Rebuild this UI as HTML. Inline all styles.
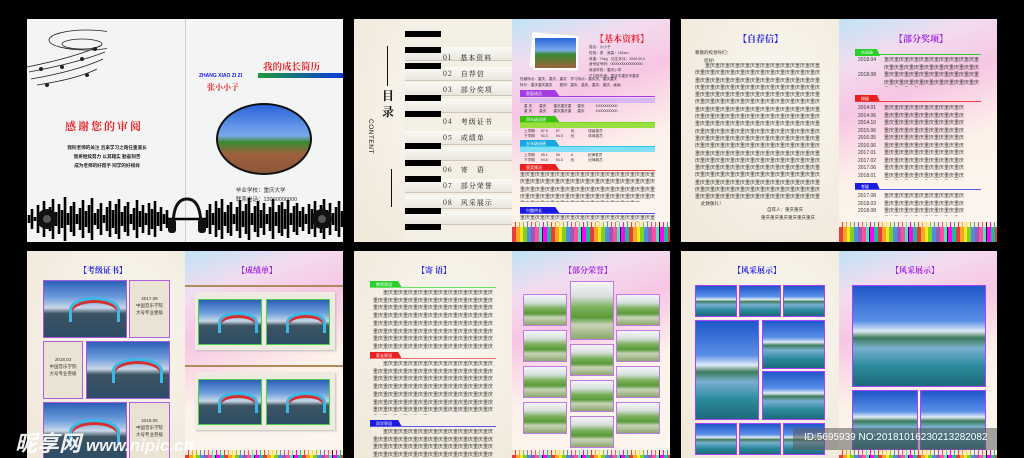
<!DOCTYPE html>
<html><head><meta charset="utf-8">
<style>
*{margin:0;padding:0;box-sizing:border-box}
body{width:1024px;height:458px;background:#000;position:relative;overflow:hidden;font-family:"Liberation Sans","Noto Sans CJK SC",sans-serif}
.a{position:absolute}
.pg{position:absolute;overflow:hidden}
.beige{background:radial-gradient(ellipse at 60% 40%,#fbf8f1 0%,#efe7d8 100%)}
.pastel{background:linear-gradient(160deg,#bfe3f5 0%,#f3dcef 18%,#f7c6e4 35%,#fdf2ea 60%,#fbf6ee 100%)}
.t{position:absolute;font-size:5px;line-height:7.3px;color:#333;overflow:hidden;word-break:break-all}
.ti{position:absolute;font-family:"Noto Serif CJK SC","Noto Sans CJK SC",serif;font-weight:bold;font-size:10px;white-space:nowrap}
.hd{position:absolute;height:7px;font-size:4px;color:#fff;line-height:7px;padding-left:6px;clip-path:polygon(0 0,88% 0,100% 100%,0 100%)}
.ln{position:absolute;height:1px}
.pencil{position:absolute;background:repeating-linear-gradient(90deg,#e83c3c 0 4px,#f5a623 4px 8px,#f8e71c 8px 11px,#7ed321 11px 15px,#4a90e2 15px 19px,#9b59b6 19px 23px,#ff4fa0 23px 27px,#50e3c2 27px 30px,#222 30px 31px,#f0f 31px 35px,#1abc9c 35px 39px)}
.pencil:before{content:"";position:absolute;left:0;right:0;top:0;height:5px;background:repeating-linear-gradient(90deg,#fde9d0 0 3px,transparent 3px 4px)}
.br{background:linear-gradient(#2c5fb8 0%,#6f9fdc 30%,#c9d6e6 48%,#3d5462 58%,#2d4c66 100%);border:1.5px solid #a45ad8}
.br:after{content:"";position:absolute;left:30%;top:28%;width:55%;height:40%;border:3px solid #3cb8e6;border-bottom:none;border-radius:50% 50% 0 0;box-shadow:inset 0 3px 0 #d43030}
.lk{background:linear-gradient(#1f57c9 0%,#5a8fe6 35%,#e0ecf6 45%,#3c7a5a 52%,#7ab0d0 62%,#2a8a9c 80%,#1d6a7a 100%);border:1.5px solid #a840ff}
.ks{background:linear-gradient(#f4f6f8 0%,#d8e0dc 25%,#7ab05a 45%,#5a9a3a 62%,#c8d4b8 75%,#8aa86a 100%);border:1.5px solid #c07ae8}
.box{background:#eae3d3;border:1.5px solid #b05ee0;font-size:4.5px;color:#333;text-align:center;line-height:7px;padding-top:14px}
.key{position:absolute;left:0;width:36px;height:6px;background:#000}
.row{position:absolute;left:0;width:107px;height:14px;border-bottom:1px solid #cfc8ba;background:linear-gradient(#fafaf6,#eae6dd)}
.it{position:absolute;left:38px;font-size:7px;color:#111;font-family:"Noto Serif CJK SC",serif;letter-spacing:1px}
.yr{position:absolute;font-size:5px;color:#333;line-height:7.5px}
</style></head><body>

<!-- ===== Spread 1 cover ===== -->
<div class="pg" style="left:27px;top:19px;width:316px;height:223px;background:#f3f5f5">
 <div class="a" style="left:158px;top:0;width:1px;height:223px;background:#ccc"></div>
 <svg class="a" style="left:0;top:8px" width="80" height="75"><g fill="none" stroke="#222" stroke-width=".8"><ellipse cx="60" cy="13" rx="38" ry="10"/><ellipse cx="55" cy="17" rx="20" ry="5"/><path d="M0 40 Q50 30 75 18 M2 45 Q50 36 78 25 M4 52 Q50 44 76 32 M10 58 Q50 52 70 42"/></g><g fill="#222"><circle cx="14" cy="42" r="2"/><circle cx="35" cy="40" r="2"/><circle cx="55" cy="32" r="2"/><circle cx="68" cy="22" r="2"/><circle cx="20" cy="58" r="2"/><circle cx="60" cy="48" r="2"/></g></svg>
 <div class="ti" style="left:38px;top:99px;color:#e8232a;font-size:11px;letter-spacing:2px">感谢您的审阅</div>
 <div class="a" style="left:20px;top:124px;width:120px;text-align:center;font-size:4.6px;line-height:9px;color:#222;font-weight:bold">我衔老师的关注 且来学习之路任重道长<br>我将继续努力 以其踏实 勤奋刻苦<br>成为老师的好帮手 同学的好榜样</div>
 <div class="ti" style="left:236px;top:40px;color:#e8232a;font-size:9.5px">我的成长简历</div>
 <div class="a" style="left:172px;top:54px;font-size:5px;color:#1a1ae0;font-weight:bold;white-space:nowrap">ZHANG XIAO ZI ZI</div>
 <div class="a" style="left:231px;top:54px;width:85px;height:5px;background:linear-gradient(90deg,#1a9a3a,#0a3ae0)"></div>
 <div class="ti" style="left:180px;top:63px;color:#e8232a;font-size:8px">张小小子</div>
 <div class="a" style="left:189px;top:84px;width:96px;height:72px;border-radius:50%;border:2px solid #111;background:linear-gradient(#2a64d8 0%,#7aa8ee 45%,#3a8a30 55%,#a0603e 72%,#8a5838 100%)"></div>
 <div class="a" style="left:209px;top:168px;font-size:5.5px;color:#333;line-height:9px">毕业学校：重庆大学<br>联系电话：13000000000</div>
 <svg class="a" style="left:0;top:176px" width="316" height="47"><g stroke="#000" stroke-width="2.6"><path d="M2 20V28M5 14V34M8 22V26M11 10V38M14 18V30M17 6V42M20 19V29M23 12V36M26 4V44M29 17V31M32 9V39M35 15V33M38 2V46M41 18V30M44 11V37M47 7V41M50 19V29M53 13V35M56 5V43M59 16V32M62 10V38M65 3V45M68 18V30M71 14V34M74 8V40M77 20V28M80 12V36M83 6V42M86 15V33M89 9V39M92 4V44M95 17V31M98 11V37M101 7V41M104 19V29M107 13V35M110 5V43M113 16V32M116 10V38M119 18V30M122 8V40M125 14V34M128 6V42M131 17V31M134 12V36M137 19V29M140 15V33M180 15V33M183 9V39M186 18V30M189 6V42M192 13V35M195 4V44M198 17V31M201 10V38M204 7V41M207 19V29M210 12V36M213 5V43M216 16V32M219 9V39M222 3V45M225 18V30M228 11V37M231 6V42M234 15V33M237 8V40M240 19V29M243 12V36M246 4V44M249 17V31M252 10V38M255 7V41M258 14V34M261 5V43M264 18V30M267 11V37M270 8V40M273 16V32M276 12V36M279 19V29M282 9V39M285 14V34M288 6V42M291 17V31M294 10V38M297 4V44M300 15V33M303 8V40M306 18V30M309 12V36M312 6V42M315 16V32"/><path d="M140 24H180"/></g><circle cx="20" cy="24" r="10" fill="#111"/><circle cx="20" cy="24" r="4" fill="#555"/><circle cx="295" cy="24" r="10" fill="#111"/><circle cx="295" cy="24" r="4" fill="#555"/><path d="M146 32 Q146 4 160 4 Q174 4 174 32" fill="none" stroke="#111" stroke-width="3"/><rect x="141" y="24" width="8" height="14" rx="3" fill="#111"/><rect x="171" y="24" width="8" height="14" rx="3" fill="#111"/></svg>
</div>

<!-- ===== Spread 2 left: contents ===== -->
<div class="pg beige" style="left:354px;top:19px;width:158px;height:223px">
 <div class="a" style="left:51px;top:0;width:107px;height:223px;background:#f4efe4"></div>
 <div class="a" style="left:33px;top:27px;width:1px;height:40px;background:#111"></div>
 <div class="ti" style="left:28px;top:69px;font-size:12px;line-height:16px;width:14px;color:#111">目<br>录</div>
 <div class="a" style="left:20px;top:100px;font-size:6.5px;color:#111;transform:rotate(90deg);transform-origin:left top;white-space:nowrap;letter-spacing:.5px">CONTENT</div>
 <div class="a" style="left:37px;top:150px;width:1px;height:38px;background:#111"></div>
 <div class="a" style="left:51px;top:0;width:107px;height:223px">
  <div class="row" style="top:28px"></div><div class="row" style="top:48px"></div><div class="row" style="top:63px"></div><div class="row" style="top:80px"></div><div class="row" style="top:112px"></div><div class="row" style="top:128px"></div><div class="row" style="top:160px"></div><div class="row" style="top:176px"></div><div class="row" style="top:192px"></div>
  <div class="key" style="top:12px"></div><div class="key" style="top:28px"></div><div class="key" style="top:44px"></div><div class="key" style="top:76px"></div><div class="key" style="top:92px"></div><div class="key" style="top:124px"></div><div class="key" style="top:141px"></div><div class="key" style="top:157px"></div><div class="key" style="top:189px"></div><div class="key" style="top:205px"></div>
  <div class="it" style="top:34px">01　基本资料</div>
  <div class="it" style="top:50px">02　自荐信</div>
  <div class="it" style="top:66px">03　部分奖项</div>
  <div class="it" style="top:98px">04　考级证书</div>
  <div class="it" style="top:114px">05　成绩单</div>
  <div class="it" style="top:146px">06　寄　语</div>
  <div class="it" style="top:162px">07　部分荣誉</div>
  <div class="it" style="top:179px">08　风采展示</div>
 </div>
</div>

<!-- ===== Spread 2 right: basic info ===== -->
<div class="pg pastel" style="left:512px;top:19px;width:158px;height:223px">
 <div class="a" style="left:19px;top:15px;width:46px;height:35px;background:#fff;transform:rotate(5deg)"></div>
 <div class="a" style="left:21px;top:17px;width:45px;height:34px;background:#fff;padding:2px"><div style="width:100%;height:100%;background:linear-gradient(#2a64d8,#7aa8ee 40%,#3a8a30 55%,#a0603e)"></div></div>
 <div class="ti" style="left:83px;top:13px;color:#e8232a;font-size:9px">【基本资料】</div>
 <div class="a" style="left:77px;top:26px;font-size:3.6px;line-height:5.8px;color:#333">姓名：小小子<br>性别：男　身高：160cm<br>体重：70kg　出生年月：2000.00.0<br>身份证号码：0000000000000000<br>就读学校：重庆小学<br>户口所在地：重庆市重庆市重庆</div>
 <div class="a" style="left:8px;top:58px;font-size:3.6px;line-height:5.8px;color:#333">性格特点：重庆、重庆、重庆　学习特点：重庆庆、重庆重庆<br>特长：重庆重庆重庆　　爱好：重庆、重庆、重庆、重庆、画画</div>
 <div class="hd" style="left:8px;top:71px;width:40px;background:#a53be0">家庭成员</div><div class="ln" style="left:8px;top:77px;width:135px;background:#a53be0"></div>
 <div class="a" style="left:8px;top:79px;width:135px;height:5px;background:#d8b8f0"></div>
 <div class="a" style="left:12px;top:85px;font-size:3.6px;line-height:5px;color:#333;white-space:pre">重 庆       重庆       重庆重庆重      重庆           10000000000
重 庆       重庆       重庆重庆重      重庆           10000000000</div>
 <div class="hd" style="left:8px;top:97px;width:40px;background:#38c010">四年级成绩</div><div class="ln" style="left:8px;top:103px;width:135px;background:#7cd61c"></div>
 <div class="a" style="left:8px;top:104px;width:135px;height:5px;background:#98e040"></div>
 <div class="a" style="left:12px;top:110px;font-size:3.6px;line-height:5px;color:#333;white-space:pre">上学期      97.9        97           优              班级委员
下学期      93.3        94.5        优              体育委员</div>
 <div class="hd" style="left:8px;top:121px;width:40px;background:#1aa8e0">五年级成绩</div><div class="ln" style="left:8px;top:127px;width:135px;background:#30c8f0"></div>
 <div class="a" style="left:8px;top:128px;width:135px;height:5px;background:#80e0f8"></div>
 <div class="a" style="left:12px;top:134px;font-size:3.6px;line-height:5px;color:#333;white-space:pre">上学期      95.1        98           A               纪律委员
下学期      94.6        94.5        优              纪律委员</div>
 <div class="hd" style="left:8px;top:145px;width:40px;background:#e82020">获奖情况</div><div class="ln" style="left:8px;top:151px;width:135px;background:#e84040"></div>
 <div class="t" style="left:8px;top:153px;width:135px;height:30px">重庆重庆重庆重庆重庆重庆重庆重庆重庆重庆重庆重庆重庆重庆重庆重庆重庆重庆重庆重庆重庆重庆重庆重庆重庆重庆重庆重庆重庆重庆重庆重庆重庆重庆重庆重庆重庆重庆重庆重庆重庆重庆重庆重庆重庆重庆重庆重庆重庆重庆重庆重庆重庆重庆重庆重庆重庆重庆重庆重庆重庆重庆重庆重庆重庆重庆</div>
 <div class="hd" style="left:8px;top:188px;width:40px;background:#1a1ae0">兴趣特长</div><div class="ln" style="left:8px;top:194px;width:135px;background:#4a4af0"></div>
 <div class="t" style="left:8px;top:196px;width:135px;height:14px">重庆重庆重庆重庆重庆重庆重庆重庆重庆重庆重庆重庆重庆重庆重庆重庆重庆重庆重庆重庆重庆重庆重庆重庆重庆重庆重庆</div>
 <div class="pencil" style="left:0;top:203px;width:158px;height:20px"></div>
</div>

<!-- ===== Spread 3 left: letter ===== -->
<div class="pg beige" style="left:681px;top:19px;width:158px;height:223px">
 <div class="ti" style="left:57px;top:13px;color:#1a1ae0;font-size:9px">【自荐信】</div>
 <div class="a" style="left:14px;top:30px;font-size:4.5px;line-height:8px;color:#333">尊敬的校领导们：<br>　　您好!</div>
 <div class="t" style="left:14px;top:44px;width:128px;height:138px;text-indent:10px">重庆重庆重庆重庆重庆重庆重庆重庆重庆重庆重庆重庆重庆重庆重庆重庆重庆重庆重庆重庆重庆重庆重庆重庆重庆重庆重庆重庆重庆重庆重庆重庆重庆重庆重庆重庆重庆重庆重庆重庆重庆重庆重庆重庆重庆重庆重庆重庆重庆重庆重庆重庆重庆重庆重庆重庆重庆重庆重庆重庆重庆重庆重庆重庆重庆重庆重庆重庆重庆重庆重庆重庆重庆重庆重庆重庆重庆重庆重庆重庆重庆重庆重庆重庆重庆重庆重庆重庆重庆重庆重庆重庆重庆重庆重庆重庆重庆重庆重庆重庆重庆重庆重庆重庆重庆重庆重庆重庆重庆重庆重庆重庆重庆重庆重庆重庆重庆重庆重庆重庆重庆重庆重庆重庆重庆重庆重庆重庆重庆重庆重庆重庆重庆重庆重庆重庆重庆重庆重庆重庆重庆重庆重庆重庆重庆重庆重庆重庆重庆重庆重庆重庆重庆重庆重庆重庆重庆重庆重庆重庆重庆重庆重庆重庆重庆重庆重庆重庆重庆重庆重庆重庆重庆重庆重庆重庆重庆重庆重庆重庆重庆重庆重庆重庆重庆重庆重庆重庆重庆重庆重庆重庆重庆重庆重庆重庆重庆重庆重庆重庆重庆重庆重庆重庆重庆重庆重庆重庆重庆重庆重庆重庆重庆重庆重庆重庆重庆重庆重庆重庆重庆重庆重庆重庆重庆重庆重庆重庆重庆重庆重庆重庆重庆重庆重庆重庆重庆重庆重庆重庆重庆重庆重庆重庆重庆重庆重庆重庆重庆重庆重庆重庆重庆重庆重庆重庆重庆重庆重庆重庆重庆重庆重庆重庆重庆重庆重庆重庆重庆重庆重庆重庆重庆重庆重庆重庆重庆重庆重庆重庆重庆重庆重庆重庆重庆重庆重庆重庆重庆重庆重庆重庆重庆重庆重庆重庆重庆重庆重庆重庆重庆重庆重庆重庆重庆重庆重庆重庆重庆重庆重庆重庆重庆重庆重庆重庆重庆重庆重庆重庆重庆重庆重庆重庆重庆重庆重庆重庆重庆重庆重庆重庆重庆重庆重庆重庆重庆重庆重庆重庆重庆重庆重庆重庆重庆重庆重庆重庆重庆重庆重庆重庆重庆重庆重庆</div>
 <div class="a" style="left:20px;top:182px;font-size:4.5px;color:#333">此致敬礼！</div>
 <div class="a" style="left:86px;top:187px;font-size:4.5px;line-height:8px;color:#333">自荐人：重庆重庆<br><span style="margin-left:-6px">重庆重庆重庆重庆重庆重庆</span></div>
</div>

<!-- ===== Spread 3 right: awards ===== -->
<div class="pg pastel" style="left:839px;top:19px;width:158px;height:223px">
 <div class="ti" style="left:55px;top:13px;color:#9b1ae0;font-size:9px">【部分奖项】</div>
 <div class="hd" style="left:16px;top:30px;width:25px;background:#2ad02a">市县级</div><div class="ln" style="left:16px;top:35px;width:126px;background:#2ad02a"></div>
 <div class="yr" style="left:19px;top:38px">2018.04<br><br>2018.08</div>
 <div class="t" style="left:45px;top:38px;width:97px;height:30px;line-height:7.5px">重庆重庆重庆重庆重庆重庆重庆重庆重庆重庆重庆重庆重庆重庆重庆重庆重庆重庆重庆重庆重庆重庆重庆重庆重庆重庆重庆重庆重庆重庆重庆重庆重庆重庆重庆重庆重庆重庆重庆重庆重庆重庆</div>
 <div class="hd" style="left:16px;top:76px;width:25px;background:#e82020">校级</div><div class="ln" style="left:16px;top:82px;width:126px;background:#e84040"></div>
 <div class="yr" style="left:19px;top:86px">2014.01<br>2014.06<br>2014.10<br>2015.06<br>2016.05<br>2016.06<br>2017.01<br>2017.02<br>2017.06<br>2018.01</div>
 <div class="t" style="left:45px;top:86px;width:82px;height:75px;line-height:7.5px">重庆重庆重庆重庆重庆重庆重庆重庆重庆重庆重庆重庆重庆重庆重庆重庆重庆重庆重庆重庆重庆重庆重庆重庆重庆重庆重庆重庆重庆重庆重庆重庆重庆重庆重庆重庆重庆重庆重庆重庆重庆重庆重庆重庆重庆重庆重庆重庆重庆重庆重庆重庆重庆重庆重庆重庆重庆重庆重庆重庆重庆重庆重庆重庆重庆重庆重庆重庆重庆重庆重庆重庆重庆重庆重庆重庆重庆重庆重庆重庆重庆重庆重庆重庆重庆重庆重庆重庆重庆重庆</div>
 <div class="hd" style="left:16px;top:164px;width:25px;background:#1a1ae0">考级</div><div class="ln" style="left:16px;top:170px;width:126px;background:#5a5af0"></div>
 <div class="yr" style="left:19px;top:174px">2017.08<br>2018.03<br>2018.08</div>
 <div class="t" style="left:45px;top:174px;width:82px;height:23px;line-height:7.5px">重庆重庆重庆重庆重庆重庆重庆重庆重庆重庆重庆重庆重庆重庆重庆重庆重庆重庆重庆重庆重庆重庆重庆重庆重庆重庆重庆重庆重庆重庆重庆重庆重庆重庆重庆重庆重庆</div>
 <div class="pencil" style="left:0;top:203px;width:158px;height:20px"></div>
</div>

<!-- ===== Bottom spread 4 left ===== -->
<div class="pg beige" style="left:27px;top:251px;width:158px;height:207px">
 <div class="ti" style="left:52px;top:14px;color:#1a1ae0;font-size:8px">【考级证书】</div>
 <div class="a br" style="left:16px;top:29px;width:84px;height:58px"></div>
 <div class="a box" style="left:102px;top:29px;width:41px;height:58px">2017.08<br>中国音乐学院<br>大号专业壹级</div>
 <div class="a box" style="left:16px;top:90px;width:40px;height:58px">2018.03<br>中国音乐学院<br>大号专业叁级</div>
 <div class="a br" style="left:59px;top:90px;width:84px;height:58px"></div>
 <div class="a br" style="left:16px;top:151px;width:84px;height:60px"></div>
 <div class="a box" style="left:102px;top:151px;width:41px;height:60px">2018.08<br>中国音乐学院<br>大号专业叁级</div>
</div>
<!-- Bottom spread 4 right -->
<div class="pg pastel" style="left:185px;top:251px;width:158px;height:207px">
 <div class="ti" style="left:52px;top:14px;color:#9b1ae0;font-size:8px">【成绩单】</div>
 <div class="a" style="left:0;top:34px;width:158px;height:1.5px;background:#b08a5a"></div>
 <div class="a" style="left:10px;top:41px;width:140px;height:58px;background:#efebe0;box-shadow:1px 1px 2px #bbb"></div>
 <div class="a br" style="left:13px;top:48px;width:64px;height:46px;border-color:#4ad04a"></div>
 <div class="a br" style="left:81px;top:48px;width:64px;height:46px;border-color:#4ad04a"></div>
 <div class="a" style="left:0;top:114px;width:158px;height:1.5px;background:#b08a5a"></div>
 <div class="a" style="left:10px;top:121px;width:140px;height:58px;background:#efebe0;box-shadow:1px 1px 2px #bbb"></div>
 <div class="a br" style="left:13px;top:128px;width:64px;height:46px;border-color:#4ad04a"></div>
 <div class="a br" style="left:81px;top:128px;width:64px;height:46px;border-color:#4ad04a"></div>
 <div class="pencil" style="left:0;top:199px;width:158px;height:12px"></div>
</div>

<!-- ===== Bottom spread 5 left ===== -->
<div class="pg beige" style="left:354px;top:251px;width:158px;height:207px">
 <div class="ti" style="left:63px;top:14px;color:#1a1ae0;font-size:8px">【寄 语】</div>
 <div class="hd" style="left:16px;top:30px;width:32px;background:#2ad02a">教师寄语</div><div class="ln" style="left:16px;top:36px;width:126px;background:#6ae06a"></div>
 <div class="t" style="left:19px;top:39px;width:123px;height:60px;text-indent:10px;line-height:7.7px">重庆重庆重庆重庆重庆重庆重庆重庆重庆重庆重庆重庆重庆重庆重庆重庆重庆重庆重庆重庆重庆重庆重庆重庆重庆重庆重庆重庆重庆重庆重庆重庆重庆重庆重庆重庆重庆重庆重庆重庆重庆重庆重庆重庆重庆重庆重庆重庆重庆重庆重庆重庆重庆重庆重庆重庆重庆重庆重庆重庆重庆重庆重庆重庆重庆重庆重庆重庆重庆重庆重庆重庆重庆重庆重庆重庆重庆重庆重庆重庆重庆重庆重庆重庆重庆重庆重庆重庆重庆重庆重庆重庆重庆重庆重庆重庆</div>
 <div class="hd" style="left:16px;top:101px;width:32px;background:#e82020">家长寄语</div><div class="ln" style="left:16px;top:107px;width:126px;background:#f07070"></div>
 <div class="t" style="left:19px;top:110px;width:123px;height:54px;text-indent:10px;line-height:7.7px">重庆重庆重庆重庆重庆重庆重庆重庆重庆重庆重庆重庆重庆重庆重庆重庆重庆重庆重庆重庆重庆重庆重庆重庆重庆重庆重庆重庆重庆重庆重庆重庆重庆重庆重庆重庆重庆重庆重庆重庆重庆重庆重庆重庆重庆重庆重庆重庆重庆重庆重庆重庆重庆重庆重庆重庆重庆重庆重庆重庆重庆重庆重庆重庆重庆重庆重庆重庆重庆重庆重庆重庆重庆重庆重庆重庆重庆重庆重庆重庆重庆重庆重庆重庆重庆重庆重庆重庆重庆</div>
 <div class="hd" style="left:16px;top:169px;width:32px;background:#1a1ae0">同学寄语</div><div class="ln" style="left:16px;top:175px;width:126px;background:#5a5af0"></div>
 <div class="t" style="left:19px;top:178px;width:123px;height:30px;text-indent:10px;line-height:7.7px">重庆重庆重庆重庆重庆重庆重庆重庆重庆重庆重庆重庆重庆重庆重庆重庆重庆重庆重庆重庆重庆重庆重庆重庆重庆重庆重庆重庆重庆重庆重庆重庆重庆重庆重庆重庆重庆重庆重庆重庆重庆重庆重庆重庆重庆重庆重庆重庆是同学们学习的好榜样</div>
</div>
<!-- Bottom spread 5 right -->
<div class="pg pastel" style="left:512px;top:251px;width:158px;height:207px">
 <div class="ti" style="left:52px;top:14px;color:#9b1ae0;font-size:8px">【部分荣誉】</div>
 <div class="a ks" style="left:11px;top:43px;width:44px;height:32px"></div>
 <div class="a ks" style="left:11px;top:79px;width:44px;height:32px"></div>
 <div class="a ks" style="left:11px;top:115px;width:44px;height:32px"></div>
 <div class="a ks" style="left:11px;top:151px;width:44px;height:32px"></div>
 <div class="a ks" style="left:58px;top:30px;width:44px;height:59px"></div>
 <div class="a ks" style="left:58px;top:93px;width:44px;height:32px"></div>
 <div class="a ks" style="left:58px;top:129px;width:44px;height:32px"></div>
 <div class="a ks" style="left:58px;top:165px;width:44px;height:32px"></div>
 <div class="a ks" style="left:104px;top:43px;width:44px;height:32px"></div>
 <div class="a ks" style="left:104px;top:79px;width:44px;height:32px"></div>
 <div class="a ks" style="left:104px;top:115px;width:44px;height:32px"></div>
 <div class="a ks" style="left:104px;top:151px;width:44px;height:32px"></div>
 <div class="pencil" style="left:0;top:199px;width:158px;height:12px"></div>
</div>

<!-- ===== Bottom spread 6 left ===== -->
<div class="pg beige" style="left:681px;top:251px;width:158px;height:207px">
 <div class="ti" style="left:52px;top:14px;color:#1a1ae0;font-size:8px">【风采展示】</div>
 <div class="a lk" style="left:14px;top:34px;width:42px;height:32px"></div>
 <div class="a lk" style="left:58px;top:34px;width:42px;height:32px"></div>
 <div class="a lk" style="left:102px;top:34px;width:42px;height:32px"></div>
 <div class="a lk" style="left:14px;top:69px;width:64px;height:100px"></div>
 <div class="a lk" style="left:81px;top:69px;width:63px;height:49px"></div>
 <div class="a lk" style="left:81px;top:120px;width:63px;height:49px"></div>
 <div class="a lk" style="left:14px;top:172px;width:42px;height:32px"></div>
 <div class="a lk" style="left:58px;top:172px;width:42px;height:32px"></div>
 <div class="a lk" style="left:102px;top:172px;width:42px;height:32px"></div>
</div>
<!-- Bottom spread 6 right -->
<div class="pg pastel" style="left:839px;top:251px;width:158px;height:207px">
 <div class="ti" style="left:52px;top:14px;color:#9b1ae0;font-size:8px">【风采展示】</div>
 <div class="a lk" style="left:13px;top:34px;width:134px;height:102px"></div>
 <div class="a lk" style="left:13px;top:139px;width:66px;height:60px"></div>
 <div class="a lk" style="left:81px;top:139px;width:66px;height:60px"></div>
 <div class="pencil" style="left:0;top:199px;width:158px;height:12px"></div>
</div>

<!-- watermarks -->
<div class="a" style="left:15px;top:426px;font-size:22px;font-weight:bold;color:#fff;font-style:italic;white-space:nowrap;font-family:'Noto Sans CJK SC',sans-serif;opacity:.92">昵享网 <span style="font-size:17px;font-family:'Liberation Sans',sans-serif">www.nipic.cn</span></div>
<div class="a" style="left:793px;top:428px;width:204px;height:22px;background:rgba(90,90,90,.55)"></div>
<div class="a" style="left:804px;top:432px;font-size:10px;color:#fff;white-space:nowrap">ID:5695939 NO:20181016230213282082</div>
</body></html>
